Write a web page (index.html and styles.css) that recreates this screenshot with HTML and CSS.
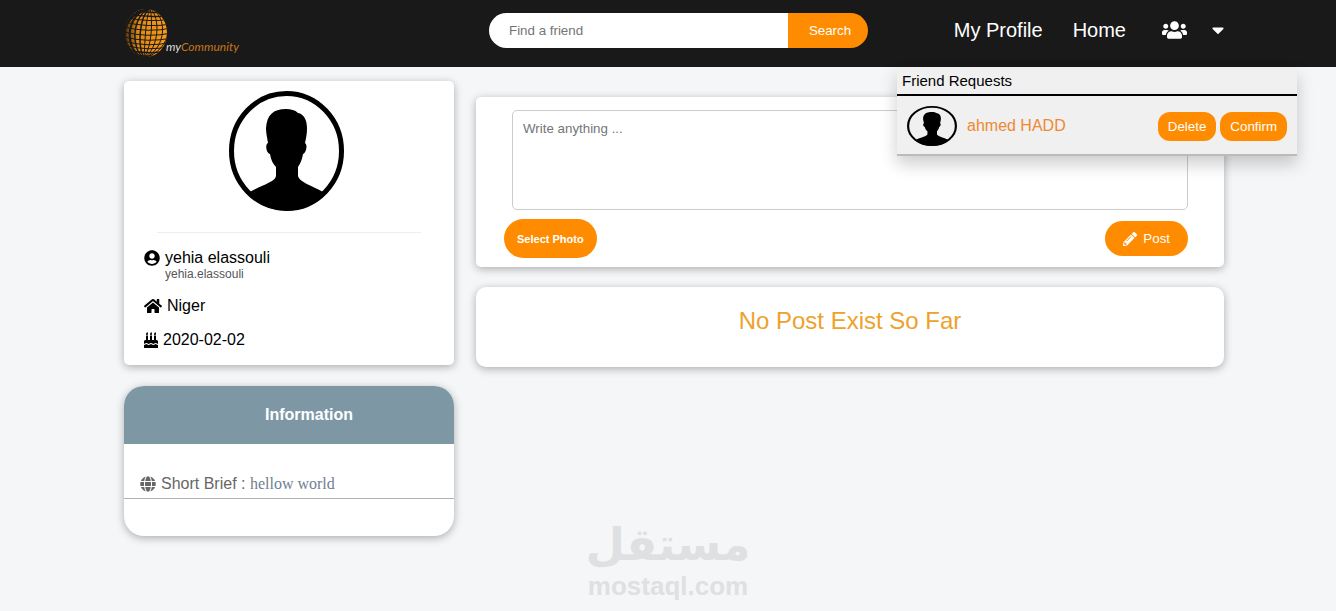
FILE: index.html
```html
<!DOCTYPE html>
<html lang="en">
<head>
    <meta charset="UTF-8">
    <meta name="viewport" content="width=device-width, initial-scale=1.0">
    <title>myCommunity</title>
    <link rel="stylesheet" href="styles.css">
</head>
<body>

    <!-- shared avatar shape -->
    <svg class="sprite" aria-hidden="true">
        <symbol id="avatar" viewBox="0 0 115 120" preserveAspectRatio="none">
            <clipPath id="avatar-clip"><ellipse cx="57.5" cy="60" rx="57" ry="59.5"/></clipPath>
            <path clip-path="url(#avatar-clip)" d="M57 18C62 18 66 19 69 22C75 23 78 29 78 38C78 43 77 47 76 52C79 54 77 62 74 63C73 69 71 73 69 76V85C70 91 82 94 94 101L100 120H15L21 101C33 94 46 91 47 85V76C44 73 42 69 41 63C37 62 36 53 39 52C38 46 37 42 37 37C38 24 44 18 57 18Z"/>
            <ellipse cx="57.5" cy="60" rx="55" ry="57.5" fill="none" stroke="#000" stroke-width="5"/>
        </symbol>
    </svg>

    <nav class="navbar">
        <div class="container nav-row">
            <a class="logo" href="#" aria-label="myCommunity">
                <svg class="globe" viewBox="0 0 48 52" aria-hidden="true">
                    <defs>
                        <linearGradient id="globe-fill" x1="0" x2="1" y1="0" y2="0">
                            <stop offset="0" stop-color="#4a2c0a"/>
                            <stop offset="0.3" stop-color="#e08a14"/>
                            <stop offset="1" stop-color="#ff9d1a"/>
                        </linearGradient>
                        <clipPath id="globe-clip"><ellipse cx="22" cy="25" rx="21" ry="24"/></clipPath>
                    </defs>
                    <g clip-path="url(#globe-clip)">
                        <rect width="48" height="52" fill="url(#globe-fill)"/>
                        <g fill="none" stroke="#191919">
                            <path stroke-width="3" d="M26 0C-7 6 -7 44 20 50"/>
                            <path stroke-width="2" d="M26 0C0 6 0 44 20 50"/>
                            <path stroke-width="1.5" d="M26 0C7 8 7 42 20 50M26 0C14 10 14 40 20 50"/>
                            <path stroke-width="1" d="M26 0C21 12 21 38 20 50M26 0C29 12 28 38 20 50M26 0C37 10 35 40 20 50M26 0C45 8 42 42 20 50M26 0C52 8 49 42 20 50"/>
                            <path stroke-width="1.5" d="M0 1Q24 7 48 3M0 5Q24 11 48 7M0 41Q24 48 48 42M0 45Q24 51 48 46"/>
                            <path stroke-width="1" d="M0 9Q24 15 48 11M0 14Q24 20 48 16M0 19Q24 25 48 20M0 24Q24 30 48 25M0 29Q24 35 48 30M0 33Q24 40 48 34M0 37Q24 44 48 38"/>
                        </g>
                    </g>
                </svg>
                <span class="logo-text">my<span>Community</span></span>
            </a>

            <form class="search" role="search">
                <input type="text" name="friend" placeholder="Find a friend" aria-label="Find a friend">
                <button type="submit">Search</button>
            </form>

            <div class="nav-links">
                <a href="#">My Profile</a>
                <a href="#">Home</a>
                <button class="nav-icon" id="requests-toggle" type="button" aria-label="Friend Requests">
                    <svg width="25" height="20" viewBox="0 0 640 512" fill="currentColor"><path d="M96 224c35.300 0 64-28.700 64-64s-28.700-64-64-64-64 28.700-64 64 28.700 64 64 64zm448 0c35.300 0 64-28.700 64-64s-28.700-64-64-64-64 28.700-64 64 28.700 64 64 64zm32 32h-64c-17.600 0-33.500 7.100-45.100 18.600 40.300 22.100 68.900 62 75.100 109.400h66c17.700 0 32-14.300 32-32v-32c0-35.300-28.700-64-64-64zm-256 0c61.900 0 112-50.100 112-112S381.900 32 320 32 208 82.100 208 144s50.100 112 112 112zm76.800 32h-8.300c-20.800 10-43.900 16-68.500 16s-47.600-6-68.500-16h-8.300C179.600 288 128 339.600 128 403.200V432c0 26.500 21.500 48 48 48h288c26.500 0 48-21.500 48-48v-28.800c0-63.600-51.600-115.200-115.200-115.200zm-223.700-13.400C161.500 263.100 145.600 256 128 256H64c-35.300 0-64 28.700-64 64v32c0 17.700 14.300 32 32 32h65.900c6.300-47.400 34.900-87.300 75.200-109.400z"/></svg>
                </button>
                <button class="nav-icon" type="button" aria-label="Menu">
                    <svg width="12" height="20" viewBox="0 0 320 512" fill="currentColor"><path d="M31.300 192h257.300c17.800 0 26.700 21.500 14.100 34.100L174.100 354.800c-7.800 7.800-20.500 7.800-28.300 0L17.200 226.100C4.600 213.500 13.500 192 31.300 192z"/></svg>
                </button>
            </div>

            <div class="requests" id="requests">
                <h2>Friend Requests</h2>
                <div class="request">
                    <svg class="avatar-small" role="img" aria-label="ahmed HADD"><use href="#avatar"/></svg>
                    <a href="#">ahmed HADD</a>
                    <button type="button">Delete</button>
                    <button type="button">Confirm</button>
                </div>
            </div>
        </div>
    </nav>

    <main class="container page">
        <aside class="side">
            <section class="card profile">
                <svg class="avatar" role="img" aria-label="yehia elassouli"><use href="#avatar"/></svg>
                <hr>
                <div class="detail">
                    <svg width="16" height="16" viewBox="0 0 496 512"><path d="M248 8C111 8 0 119 0 256s111 248 248 248 248-111 248-248S385 8 248 8zm0 96c48.600 0 88 39.400 88 88s-39.400 88-88 88-88-39.400-88-88 39.400-88 88-88zm0 344c-58.700 0-111.300-26.600-146.500-68.200 18.800-35.400 55.600-59.800 98.500-59.800 2.400 0 4.800.4 7.100 1.100 13 4.200 26.600 6.900 40.900 6.900 14.300 0 28-2.700 40.900-6.900 2.300-.7 4.700-1.100 7.100-1.100 42.900 0 79.700 24.400 98.500 59.800C359.300 421.400 306.700 448 248 448z"/></svg>
                    <span>yehia elassouli</span>
                </div>
                <small>yehia.elassouli</small>
                <div class="detail">
                    <svg width="18" height="16" viewBox="0 0 576 512"><path d="M280.400 148.300L96 300.100V464a16 16 0 0 0 16 16l112.100-.3a16 16 0 0 0 15.900-16V368a16 16 0 0 1 16-16h64a16 16 0 0 1 16 16v95.600a16 16 0 0 0 16 16.100L464 480a16 16 0 0 0 16-16V300L295.700 148.300a12.200 12.200 0 0 0-15.300 0zM571.600 251.500L488 182.600V44.100a12 12 0 0 0-12-12h-56a12 12 0 0 0-12 12v72.600L318.500 43a48 48 0 0 0-61 0L4.300 251.500a12 12 0 0 0-1.600 16.900l25.500 31A12 12 0 0 0 45.200 301l235.200-193.700a12.200 12.200 0 0 1 15.300 0L530.900 301a12 12 0 0 0 16.900-1.600l25.500-31a12 12 0 0 0-1.700-16.900z"/></svg>
                    <span>Niger</span>
                </div>
                <div class="detail">
                    <svg width="14" height="16" viewBox="0 0 448 512"><path d="M448 384c-28 0-31.300-32-74.500-32-43.400 0-46.800 32-74.700 32-27.700 0-31.500-32-74.800-32-42.800 0-47.200 32-74.700 32-28.100 0-31.400-32-74.800-32C31.300 352 28 384 0 384v-80c0-26.500 21.500-48 48-48h16V112h64v144h64V112h64v144h64V112h64v144h16c26.500 0 48 21.500 48 48v80zm0 128H0v-96c43.400 0 46.800-32 74.500-32 28 0 31.600 32 74.800 32 43.200 0 46.900-32 74.700-32 28 0 31.400 32 74.800 32 43.300 0 46.700-32 74.700-32 27.700 0 31.300 32 74.500 32zM96 96c-17.800 0-32-14.300-32-32 0-31 32-23 32-64 12 0 32 29.500 32 56s-14.300 40-32 40zm128 0c-17.800 0-32-14.300-32-32 0-31 32-23 32-64 12 0 32 29.500 32 56s-14.300 40-32 40zm128 0c-17.800 0-32-14.300-32-32 0-31 32-23 32-64 12 0 32 29.500 32 56s-14.300 40-32 40z"/></svg>
                    <span>2020-02-02</span>
                </div>
            </section>

            <section class="card info">
                <h2>Information</h2>
                <div class="brief">
                    <svg width="16" height="16" viewBox="0 0 496 512" fill="currentColor"><path d="M336.500 160C322 70.700 287.800 8 248 8s-74 62.700-88.500 152h177zM152 256c0 22.200 1.200 43.500 3.300 64h185.300c2.100-20.500 3.300-41.800 3.300-64s-1.200-43.500-3.300-64H155.300c-2.100 20.500-3.300 41.800-3.300 64zm324.700-96c-28.600-67.900-86.500-120.400-158-141.600 24.400 33.800 41.200 84.700 50 141.600h108zM177.200 18.400C105.800 39.600 47.800 92.100 19.300 160h108c8.700-56.900 25.500-107.800 49.900-141.600zM487.400 192H372.700c2.100 21 3.300 42.500 3.300 64s-1.200 43-3.300 64h114.600c5.500-20.500 8.600-41.800 8.600-64s-3.100-43.500-8.500-64zM120 256c0-21.500 1.200-43 3.300-64H8.600C3.200 212.500 0 233.800 0 256s3.200 43.500 8.600 64h114.600c-2-21-3.200-42.500-3.200-64zm39.500 96c14.500 89.300 48.700 152 88.500 152s74-62.700 88.500-152h-177zm159.300 141.600c71.400-21.200 129.400-73.700 158-141.600h-108c-8.800 56.900-25.600 107.800-50 141.600zM19.300 352c28.600 67.900 86.500 120.400 158 141.600-24.400-33.800-41.200-84.700-50-141.600h-108z"/></svg>
                    <span>Short Brief : <em>hellow world</em></span>
                </div>
            </section>
        </aside>

        <div class="feed">
            <form class="card composer">
                <textarea name="post" placeholder="Write anything ..." aria-label="Write anything"></textarea>
                <div class="composer-actions">
                    <button class="photo" type="button">Select Photo</button>
                    <button class="post" type="submit">
                        <svg width="14" height="14" viewBox="0 0 512 512" fill="currentColor"><path d="M498 142l-46.600 46.600c-4.700 4.700-12.300 4.700-17 0L323.500 77.700c-4.700-4.700-4.700-12.300 0-17L370.100 14c18.700-18.700 49.100-18.700 67.900 0l60.100 60.100c18.800 18.700 18.800 49.100-.1 67.900zm-214.200-42.100L21.500 362.200.3 483.900c-2.900 16.400 11.400 30.600 27.800 27.800l121.500-21.300 262.300-262.300c4.700-4.700 4.700-12.300 0-17l-111-111c-4.800-4.800-12.400-4.800-17.100-.2zM124.100 339.900c-5.500-5.500-5.500-14.300 0-19.800l154-154c5.500-5.500 14.300-5.500 19.800 0s5.500 14.300 0 19.800l-154 154c-5.500 5.500-14.300 5.500-19.800 0zM88 424h48v36.300l-64.500 11.300-31.100-31.100L51.700 376H88v48z"/></svg>
                        Post
                    </button>
                </div>
            </form>

            <section class="card empty">
                <p>No Post Exist So Far</p>
            </section>
        </div>
    </main>

    <div class="watermark">
        <span class="watermark-ar" lang="ar" dir="rtl">مستقل</span>
        <span>mostaql.com</span>
    </div>

    <script>
        const requests = document.getElementById('requests');

        document.getElementById('requests-toggle').addEventListener('click', () => {
            requests.classList.toggle('hidden');
        });
    </script>

</body>
</html>
```
FILE: styles.css
```css
* {
    box-sizing: border-box;
}

body {
    margin: 0;
    min-height: 100vh;
    position: relative;
    background-color: #f5f6f8;
    color: #000;
    font-family: "Liberation Sans", Arial, sans-serif;
    font-size: 16px;
}

a {
    text-decoration: none;
}

button {
    border: none;
    background-color: #ff8c00;
    color: #fff;
    font-family: inherit;
    cursor: pointer;
}

    button:hover {
        background-color: #e67e00;
    }

svg {
    display: block;
    flex-shrink: 0;
}

.sprite {
    position: absolute;
    width: 0;
    height: 0;
}

.container {
    max-width: 1112px;
    margin: 0 auto;
    padding-left: 12px;
}

/* top bar */
.navbar {
    background-color: #191919;
}

.nav-row {
    position: relative;
    display: flex;
    align-items: center;
    height: 67px;
}

.logo {
    display: flex;
    align-items: flex-end;
    width: 365px;
}

.globe {
    width: 48px;
    height: 52px;
}

.logo-text {
    margin-left: -6px;
    padding-bottom: 6px;
    color: #ddd;
    font-family: Lato, sans-serif;
    font-size: 12px;
    font-style: italic;
}

    .logo-text span {
        color: #c8741a;
    }

.search {
    display: flex;
    width: 379px;
    height: 35px;
    margin-bottom: 6px;
    border-radius: 20px;
    overflow: hidden;
}

    .search input {
        flex: 1;
        min-width: 0;
        padding: 0 20px;
        border: none;
        font-family: inherit;
        outline: none;
    }

    .search button {
        width: 80px;
        padding-left: 10px;
    }

.nav-links {
    display: flex;
    align-items: center;
    margin: 0 0 7px auto;
    font-size: 20px;
}

    .nav-links a {
        margin-right: 30px;
        color: #fff;
    }

.nav-icon {
    margin-left: 6px;
    padding: 0;
    background: none;
}

    .nav-icon:hover {
        background: none;
    }

    .nav-icon + .nav-icon {
        margin-left: 25px;
    }

/* friend requests menu */
.requests {
    position: absolute;
    top: 100%;
    right: -73px;
    z-index: 1;
    width: 400px;
    background-color: #f0f0f0;
    box-shadow: 0 8px 16px rgba(0, 0, 0, 0.2);
}

    .requests.hidden {
        display: none;
    }

    .requests h2 {
        margin: 0;
        padding: 5px;
        border-bottom: 2px solid #000;
        font-size: 15px;
        font-weight: normal;
        line-height: 17px;
    }

.request {
    display: flex;
    align-items: center;
    gap: 4px;
    padding: 10px 10px 8px;
    border-bottom: 2px solid #bbb;
}

    .request a {
        margin: 0 auto 0 6px;
        color: #ee8833;
    }

    .request button {
        padding: 7px 10px;
        border-radius: 12px;
    }

.avatar-small {
    width: 50px;
    height: 40px;
}

/* page */
.page {
    display: grid;
    grid-template-columns: 30% 1fr;
    gap: 22px;
    align-items: start;
}

.card {
    background-color: #fff;
    border-radius: 5px;
    box-shadow: 0 2px 8px rgba(0, 0, 0, 0.3);
}

.side {
    display: grid;
    gap: 21px;
    padding-top: 14px;
}

.profile {
    padding: 10px 20px 16px;
}

    .profile hr {
        width: 264px;
        max-width: 100%;
        margin: 21px auto 16px;
        border: none;
        border-top: 1px solid #eee;
    }

    .profile small {
        display: block;
        margin-bottom: 16px;
        padding-left: 21px;
        color: #555;
        font-size: 12px;
        line-height: 14px;
    }

.avatar {
    width: 121px;
    height: 120px;
    margin: 0 auto;
    padding-right: 6px;
}

.detail {
    display: flex;
    align-items: center;
    gap: 5px;
    line-height: 18px;
}

    .detail + .detail {
        margin-top: 16px;
    }

.info {
    padding-bottom: 37px;
    border-radius: 20px;
    overflow: hidden;
}

    .info h2 {
        margin: 0;
        padding: 0 0 0 40px;
        background-color: #7e97a5;
        color: #fff;
        font-size: 16px;
        line-height: 58px;
        text-align: center;
    }

.brief {
    display: flex;
    align-items: center;
    gap: 5px;
    padding: 31px 16px 5px;
    border-bottom: 1px solid #aab5b5;
    color: #666;
    line-height: 18px;
}

    .brief em {
        color: #708090;
        font-family: "Liberation Serif", "Times New Roman", serif;
        font-style: normal;
    }

.feed {
    display: grid;
    gap: 20px;
    padding-top: 30px;
}

.composer {
    padding: 13px 36px 9px;
}

    .composer textarea {
        display: block;
        width: 100%;
        height: 100px;
        padding: 10px;
        border: 1px solid #ccc;
        border-radius: 5px;
        font-family: inherit;
        resize: none;
    }

.composer-actions {
    display: flex;
    align-items: center;
    justify-content: space-between;
    margin: 9px 0 0 -8px;
}

.photo {
    height: 39px;
    padding: 0 13px;
    border-radius: 20px;
    font-size: 11px;
    font-weight: bold;
}

.post {
    display: flex;
    align-items: center;
    gap: 6px;
    height: 35px;
    padding: 0 18px;
    border-radius: 20px;
}

.empty {
    padding: 20px 0 32px;
    border-radius: 10px;
    text-align: center;
}

    .empty p {
        margin: 0;
        color: #eda22b;
        font-size: 24px;
        line-height: 28px;
    }

/* watermark over the bottom of the page */
.watermark {
    position: absolute;
    bottom: 10px;
    left: 50%;
    display: flex;
    flex-direction: column;
    align-items: center;
    transform: translateX(-50%);
    color: #dfe0e2;
    font-size: 26px;
    font-weight: bold;
    line-height: 30px;
    pointer-events: none;
}

.watermark-ar {
    font-family: "DejaVu Sans", sans-serif;
    font-size: 45px;
    line-height: 53px;
}
```
